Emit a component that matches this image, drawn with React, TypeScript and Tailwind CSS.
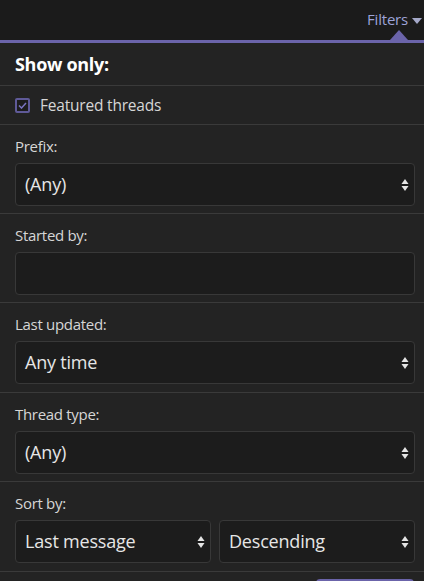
import React from "react";

const Arrows = () => (
  <svg width="8" height="14" viewBox="0 0 8 14" className="shrink-0">
    <path d="M4 1 L7.5 6 L0.5 6 Z" fill="#e5e5e5" />
    <path d="M4 13 L7.5 8 L0.5 8 Z" fill="#e5e5e5" />
  </svg>
);

const Select = ({ value, className = "" }: { value: string; className?: string }) => (
  <div
    className={
      "h-[43px] rounded-[4px] border border-[#383838] bg-[#1c1c1c] flex items-center justify-between pl-[9px] pr-[5px] text-[18px] text-[#e6e6e6] tracking-[-0.2px] " +
      className
    }
  >
    <span>{value}</span>
    <Arrows />
  </div>
);

const Section = ({ children, className = "" }: { children: React.ReactNode; className?: string }) => (
  <div className={"border-b border-[#3a3a3a] pl-[15px] pr-[9px] " + className}>{children}</div>
);

const Label = ({ children }: { children: React.ReactNode }) => (
  <div className="text-[15px] text-[#d6d6d6] tracking-[-0.3px] h-[26px] leading-[26px]">{children}</div>
);

export default function App() {
  return (
    <div
      className="w-[424px] h-[581px] overflow-hidden bg-[#232323] relative"
      style={{ fontFamily: '"Open Sans", "Noto Sans", sans-serif' }}
    >
      <div className="h-[40px] bg-[#1b1b1b] flex items-center justify-end pr-[2px] relative">
        <span className="text-[15px] text-[#9da3d8] tracking-[-0.2px] mt-[-1px]">Filters</span>
        <svg width="10" height="6" viewBox="0 0 10 6" className="ml-[4px] mt-[1px]">
          <path d="M0 0 L10 0 L5 6 Z" fill="#a5a9c9" />
        </svg>
        <svg width="18" height="10" viewBox="0 0 18 10" className="absolute right-[16px] bottom-0">
          <path d="M0 10 L9 0 L18 10 Z" fill="#6b64aa" />
        </svg>
      </div>
      <div className="h-[3px] bg-[#6b64aa]" />
      <Section className="h-[43px] flex items-center">
        <span className="text-[18px] font-bold text-white tracking-[-0.3px]">Show only:</span>
      </Section>
      <Section className="h-[39px] flex items-center">
        <div className="w-[15px] h-[15px] rounded-[2px] border-2 border-[#5f5a98] bg-[#1c1c1c] flex items-center justify-center">
          <svg width="9" height="7" viewBox="0 0 9 7">
            <path d="M1 3.5 L3.5 6 L8 1" stroke="#7a74c0" strokeWidth="1.5" fill="none" />
          </svg>
        </div>
        <span className="ml-[10px] mt-[2px] text-[15.5px] text-[#d6d6d6] tracking-[-0.2px]">Featured threads</span>
      </Section>
      <Section className="h-[89px] pt-[8px]">
        <Label>Prefix:</Label>
        <Select value="(Any)" className="mt-[4px]" />
      </Section>
      <Section className="h-[89px] pt-[8px]">
        <Label>Started by:</Label>
        <div className="mt-[4px] h-[43px] rounded-[4px] border border-[#383838] bg-[#1c1c1c]" />
      </Section>
      <Section className="h-[90px] pt-[8px]">
        <Label>Last updated:</Label>
        <Select value="Any time" className="mt-[4px]" />
      </Section>
      <Section className="h-[89px] pt-[8px]">
        <Label>Thread type:</Label>
        <Select value="(Any)" className="mt-[4px]" />
      </Section>
      <Section className="h-[90px] pt-[8px]">
        <Label>Sort by:</Label>
        <div className="mt-[4px] grid grid-cols-2 gap-[8px]">
          <Select value="Last message" />
          <Select value="Descending" />
        </div>
      </Section>
      <div className="flex justify-end pr-[10px] pt-[7px]">
        <div className="w-[98px] h-[30px] rounded-[4px] bg-[#6b64aa]" />
      </div>
    </div>
  );
}
